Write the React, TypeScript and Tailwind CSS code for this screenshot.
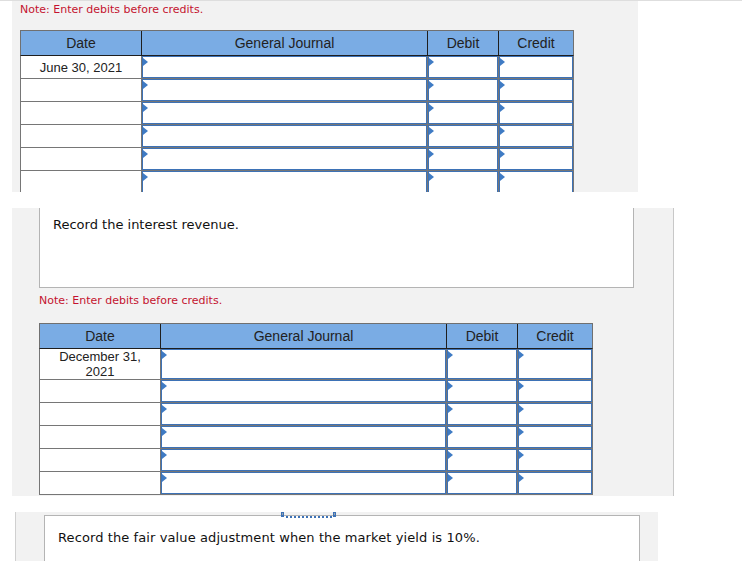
import React from "react";

const cols = [
  { label: "Date", w: "w-[121px]" },
  { label: "General Journal", w: "w-[286px]" },
  { label: "Debit", w: "w-[71px]" },
  { label: "Credit", w: "w-[74px]" },
];

function Flag() {
  return (
    <svg className="absolute left-0 top-[1px]" width="6" height="8" viewBox="0 0 6 8">
      <path d="M0 0 L5 4 L0 8 Z" fill="#3f7bc4" />
    </svg>
  );
}

function InputCell({ w, last }: { w: string; last?: boolean }) {
  return (
    <div className={`${w} h-full ${last ? "" : "border-r border-[#767676]"}`}>
      <div className="relative h-full bg-white border border-[#3d72b6]">
        <Flag />
      </div>
    </div>
  );
}

type Row = { date?: string[]; tall?: boolean };

function JournalTable({ rows }: { rows: Row[] }) {
  return (
    <div className="w-[554px] font-['Liberation_Sans',Arial,sans-serif] text-[13px] text-[#222]">
      <div className="flex h-[26px] border border-[#707070] border-b-[#1e1e1e] bg-[#7aace4] text-[14px]">
        {cols.map((c, i) => (
          <div
            key={c.label}
            className={`${c.w} flex items-center justify-center ${
              i < cols.length - 1 ? "border-r border-[#1e1e1e]" : ""
            }`}
          >
            {c.label}
          </div>
        ))}
      </div>
      <div className="border-x border-[#767676]">
        {rows.map((r, idx) => (
          <div
            key={idx}
            className={`flex ${r.tall ? "h-[31px]" : "h-[23px]"} border-b border-[#767676]`}
          >
            <div className="w-[121px] h-full border-r border-[#767676] bg-white flex flex-col items-center justify-center leading-[15px]">
              {r.date?.map((d) => (
                <span key={d}>{d}</span>
              ))}
            </div>
            <InputCell w="w-[286px]" />
            <InputCell w="w-[71px]" />
            <InputCell w="w-[74px]" last />
          </div>
        ))}
      </div>
    </div>
  );
}

const note = "Note: Enter debits before credits.";

export default function App() {
  return (
    <div className="w-[742px] h-[561px] overflow-hidden bg-white font-['DejaVu_Sans',Verdana,sans-serif]">
      <div className="h-px bg-[#dedede]" />

      {/* first entry */}
      <div className="ml-[12px] w-[626px] h-[191px] overflow-hidden bg-[#f2f2f2] pl-[8px]">
        <p className="mt-[2px] text-[11px] leading-[14px] text-[#c4122f]">{note}</p>
        <div className="mt-[13px]">
          <JournalTable
            rows={[{ date: ["June 30, 2021"] }, {}, {}, {}, {}, {}, {}]}
          />
        </div>
      </div>

      {/* second entry */}
      <div className="mt-[16px] ml-[12px] w-[662px] bg-[#f2f2f2] border-r border-[#c8c8c8] pl-[27px] pb-px">
        <div className="w-[595px] h-[80px] bg-white border-x border-b border-[#b4b4b4] pl-[13px] pt-[9px]">
          <p className="text-[13px] leading-[16px] text-[#111]">Record the interest revenue.</p>
        </div>
        <p className="mt-[6px] text-[11px] leading-[14px] text-[#c4122f]">{note}</p>
        <div className="mt-[15px]">
          <JournalTable
            rows={[{ date: ["December 31,", "2021"], tall: true }, {}, {}, {}, {}, {}]}
          />
        </div>
      </div>

      {/* third entry */}
      <div className="mt-[16px] ml-[15px] w-[643px] h-[60px] bg-[#f2f2f2] border-l border-[#d0d0d0] pl-[28px] pt-[3px]">
        <div className="relative w-[596px] h-[60px] bg-white border-t border-x border-[#b4b4b4] pl-[13px] pt-[14px]">
          <svg className="absolute left-[236px] top-[-4px]" width="56" height="8" viewBox="0 0 56 8">
            <rect x="0" y="0" width="3" height="5" fill="#3d72b6" />
            <rect x="1" y="1" width="1" height="2" fill="#9aa4b0" />
            <rect x="52" y="0" width="3" height="5" fill="#3d72b6" />
            <rect x="53" y="1" width="1" height="2" fill="#9aa4b0" />
            {Array.from({ length: 12 }).map((_, i) => (
              <rect key={i} x={5 + i * 4} y="4" width="2" height="2" fill="#3d72b6" />
            ))}
          </svg>
          <p className="text-[13px] leading-[16px] tracking-[0.1px] text-[#111]">
            Record the fair value adjustment when the market yield is 10%.
          </p>
        </div>
      </div>
    </div>
  );
}
